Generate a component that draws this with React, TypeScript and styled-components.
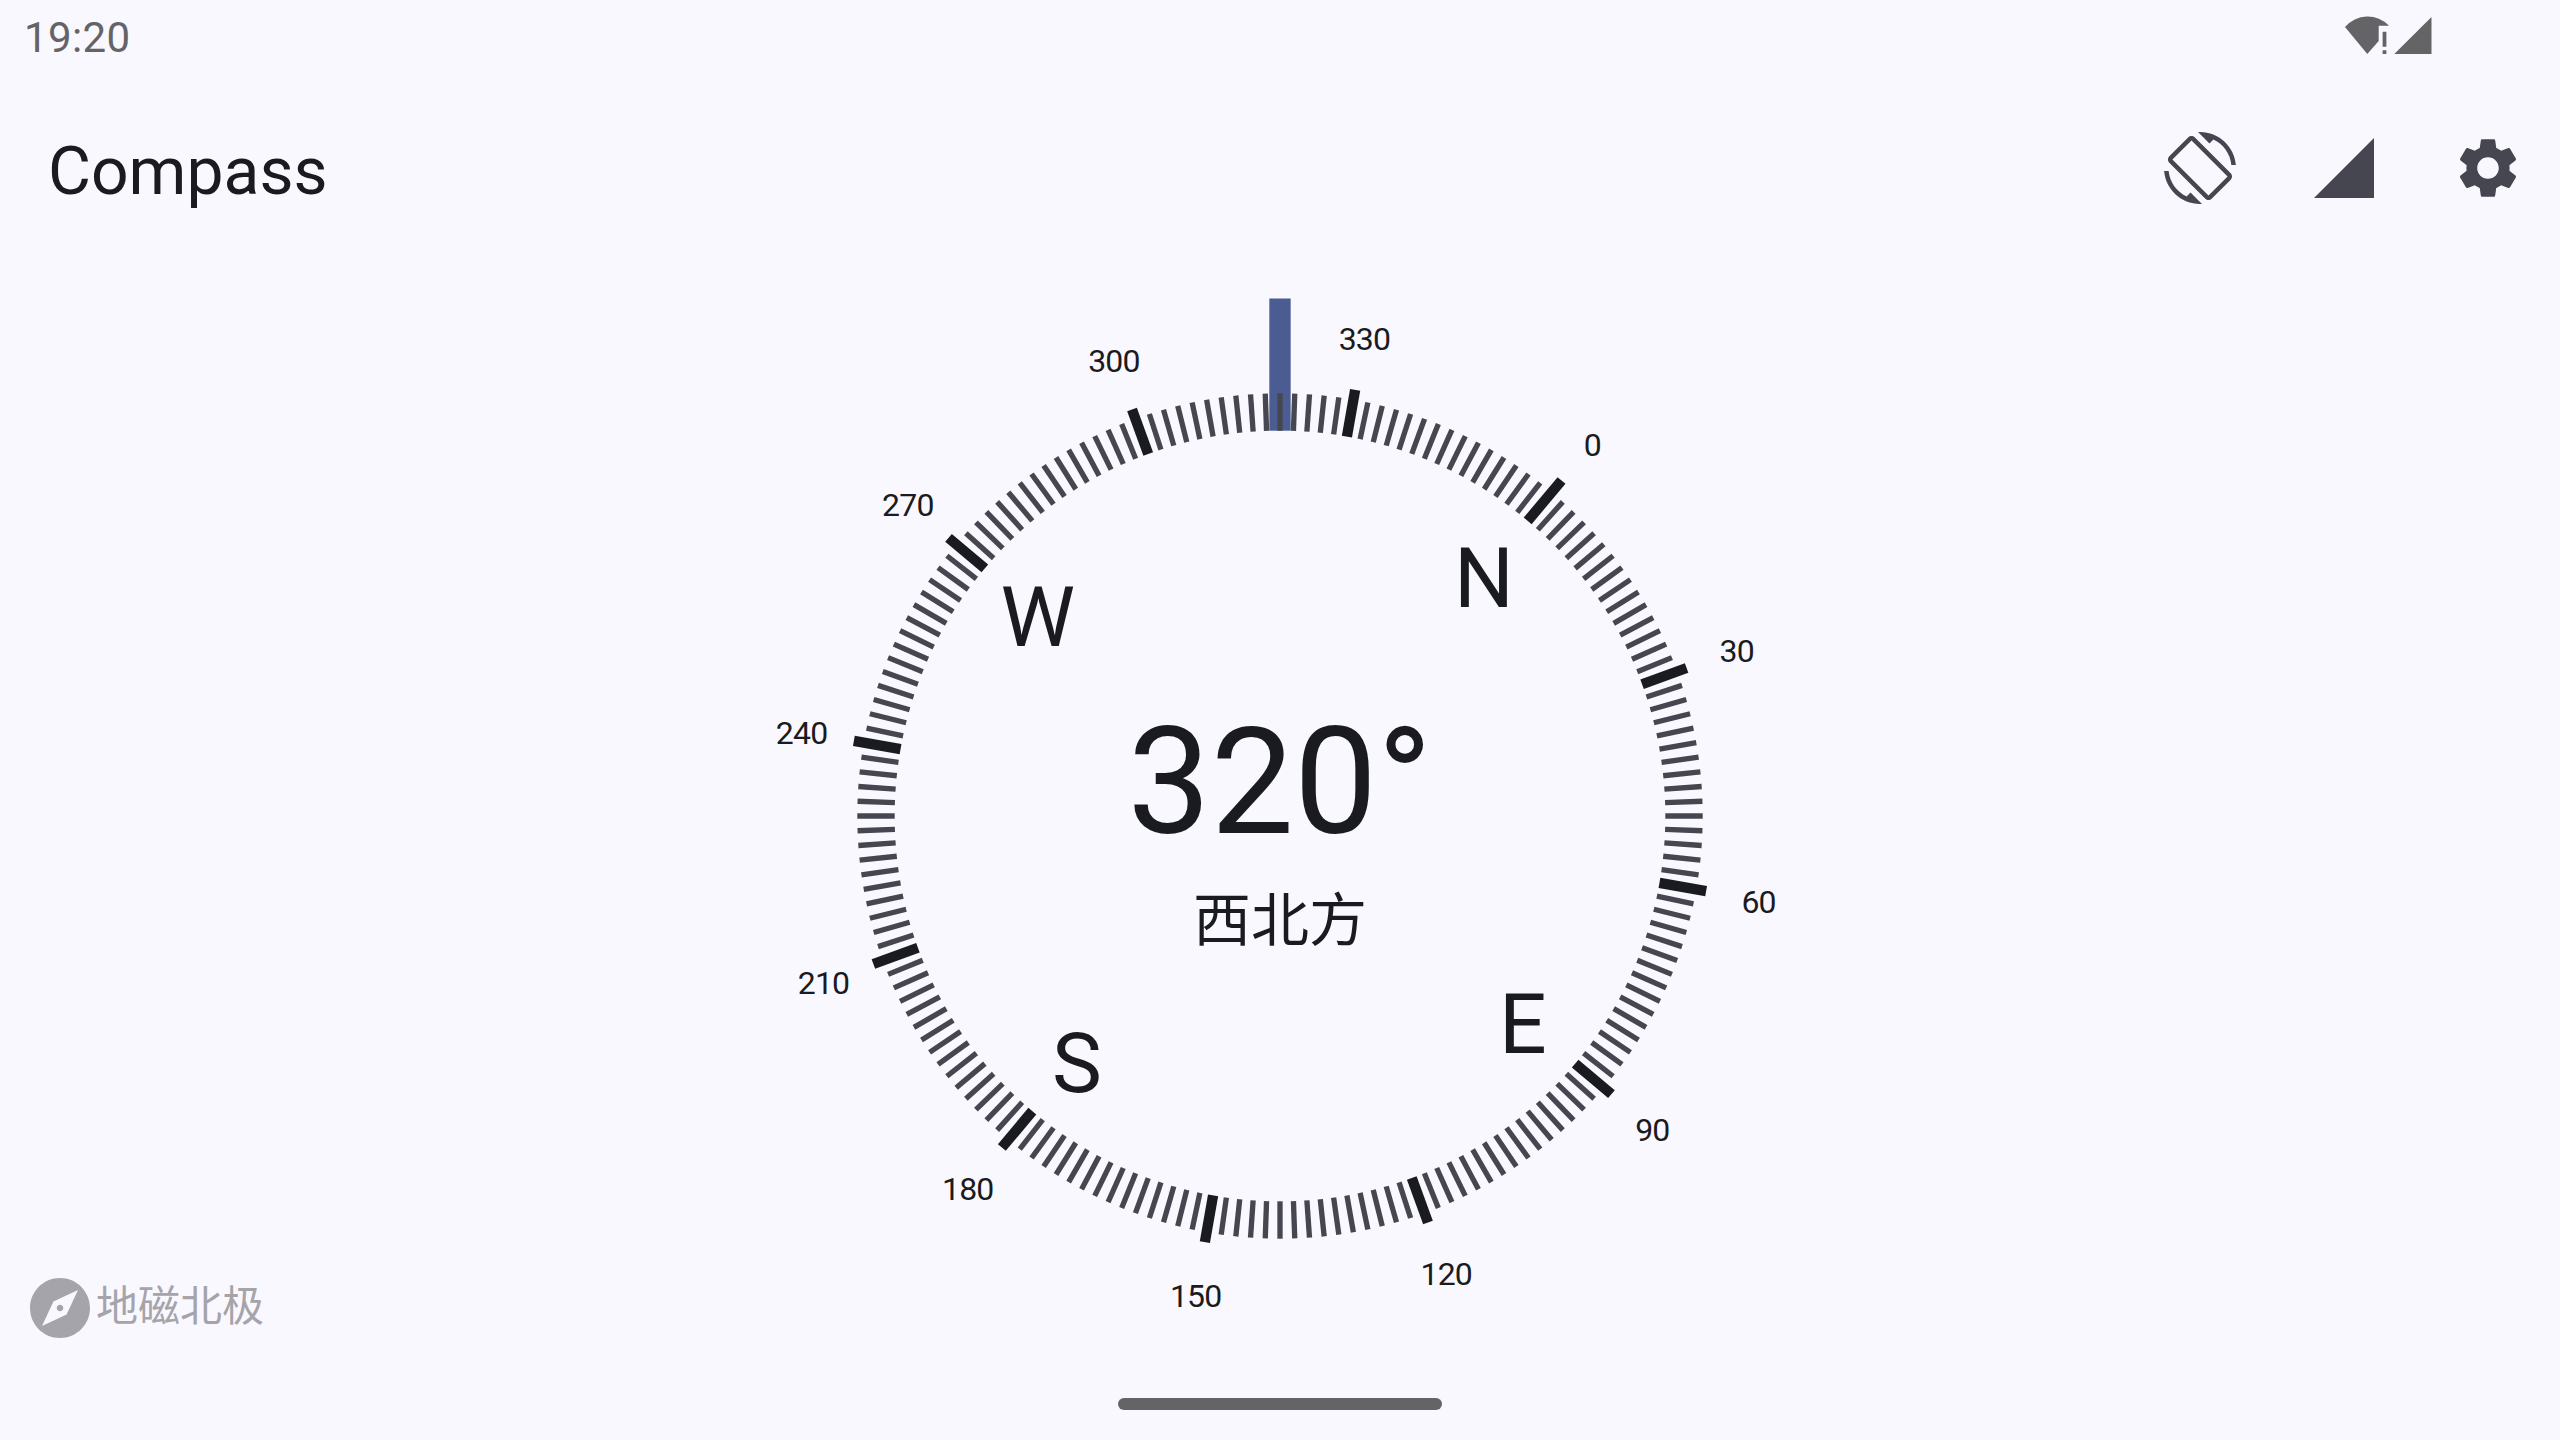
import React from "react";
import styled, { createGlobalStyle } from "styled-components";

const color = {
  surface: "#faf8ff",
  onSurface: "#1a1b20",
  variant: "#45464f",
  primary: "#4b5c92",
  system: "#646466",
  disabled: "#a5a4aa",
};

const GlobalStyle = createGlobalStyle`
  * { box-sizing: border-box; }
  body {
    margin: 0;
    background: ${color.surface};
    color: ${color.onSurface};
    font-family: Roboto, "Noto Sans CJK SC", sans-serif;
  }
`;

const Screen = styled.div`
  display: flex;
  flex-direction: column;
  width: 2560px;
  height: 1440px;
  overflow: hidden;
  background: ${color.surface};
`;

const StatusBar = styled.div`
  display: flex;
  justify-content: space-between;
  height: 72px;
  padding: 13px 127px 0 24px;
  color: ${color.system};
`;

const Clock = styled.span`
  font-size: 42px;
  line-height: 49px;
  letter-spacing: 0.35px;
`;

const StatusIcons = styled.svg`
  display: block;
  width: 90px;
  height: 48px;
  fill: currentColor;
`;

const AppBar = styled.header`
  display: flex;
  align-items: center;
  justify-content: space-between;
  height: 192px;
  padding: 0 36px 0 48px;
`;

const Title = styled.h1`
  margin: 8px 0 0;
  font-size: 66px;
  font-weight: 400;
  line-height: 84px;
`;

const Actions = styled.nav`
  display: flex;
  gap: 72px;
`;

const IconButton = styled.button`
  display: block;
  padding: 0;
  border: 0;
  background: none;
  color: ${color.variant};
`;

const Icon = styled.svg`
  display: block;
  width: 72px;
  height: 72px;
  flex: none;
  fill: currentColor;
`;

const Main = styled.main`
  display: grid;
  justify-items: center;
  height: 1104px;
`;

const Dial = styled.svg`
  grid-area: 1 / 1;
  width: 1104px;
  height: 1104px;
`;

const DialLabel = styled.text<{ $size: number; $spacing?: number }>`
  font-size: ${(p) => p.$size}px;
  letter-spacing: ${(p) => p.$spacing ?? 0}px;
  fill: ${color.onSurface};
  text-anchor: middle;
`;

const Reading = styled.div`
  grid-area: 1 / 1;
  display: flex;
  flex-direction: column;
  align-items: center;
  padding-top: 432px;
`;

const Degrees = styled.div`
  font-size: 148px;
  line-height: 174px;
`;

const Direction = styled.div`
  margin-top: 9px;
  font-size: 58px;
  line-height: 84px;
`;

const NorthMode = styled.div`
  grid-area: 1 / 1;
  justify-self: start;
  align-self: end;
  display: flex;
  align-items: center;
  padding: 0 0 24px 24px;
  color: ${color.disabled};
`;

const ModeText = styled.span`
  margin-bottom: 2px;
  font-size: 42px;
  line-height: 60px;
`;

const NavigationArea = styled.footer`
  display: flex;
  justify-content: center;
  height: 72px;
  padding-top: 30px;
`;

const Handle = styled.div`
  width: 324px;
  height: 12px;
  border-radius: 6px;
  background: ${color.system};
`;

const AZIMUTH = 320;
const CENTER = 552;

const point = (bearing: number, radius: number) => {
  const a = ((bearing - AZIMUTH) * Math.PI) / 180;
  return { x: CENTER + radius * Math.sin(a), y: CENTER - radius * Math.cos(a) };
};

const bearings = Array.from({ length: 180 }, (_, i) => i * 2);
const majors = bearings.filter((b) => b % 30 === 0);
const minors = bearings.filter((b) => b % 30 !== 0);
const cardinals = [
  { name: "N", bearing: 0 },
  { name: "E", bearing: 90 },
  { name: "S", bearing: 180 },
  { name: "W", bearing: 270 },
];

function Tick({ bearing, outer, width, stroke }: { bearing: number; outer: number; width: number; stroke: string }) {
  const a = point(bearing, 385.3);
  const b = point(bearing, outer);
  return <line x1={a.x} y1={a.y} x2={b.x} y2={b.y} stroke={stroke} strokeWidth={width} />;
}

function CompassDial() {
  return (
    <Dial viewBox="0 0 1104 1104">
      <rect x={541.33} y={34.5} width={21.33} height={132.2} fill={color.primary} />
      {minors.map((b) => (
        <Tick key={b} bearing={b} outer={422.7} width={5.33} stroke={color.variant} />
      ))}
      {majors.map((b) => (
        <Tick key={b} bearing={b} outer={b === 0 ? 438 : 432.7} width={10.3} stroke={color.onSurface} />
      ))}
      {majors.map((b) => {
        const p = point(b, 485.9);
        return (
          <DialLabel key={b} $size={32} $spacing={-0.8} x={p.x + 0.1} y={p.y + 12.2}>
            {b}
          </DialLabel>
        );
      })}
      {cardinals.map(({ name, bearing }) => {
        const p = point(bearing, 316.6);
        return (
          <DialLabel key={name} $size={84} x={p.x + 0.4} y={p.y + 33.3}>
            {name}
          </DialLabel>
        );
      })}
    </Dial>
  );
}

export default function App() {
  return (
    <Screen>
      <GlobalStyle />
      <StatusBar>
        <Clock>19:20</Clock>
        <StatusIcons viewBox="0 0 90 48">
          <path d="M2 14 A29.5 29.5 0 0 1 46 12.7 H35.7 V28 L24.3 41 Z" />
          <path d="M39.6 18.7h3.8v15h-3.8zM39.6 37.3h3.8v3.7h-3.8z" />
          <path d="M51.3 41 L88.5 4 V41 Z" />
        </StatusIcons>
      </StatusBar>
      <AppBar>
        <Title>Compass</Title>
        <Actions>
          <IconButton aria-label="Screen rotation">
            <Icon viewBox="0 0 24 24">
              <path d="M16.48 2.52c3.27 1.55 5.61 4.72 5.97 8.48h1.5C23.44 4.84 18.29 0 12 0l-.66.03 3.81 3.81 1.33-1.32zm-6.25-.77c-.59-.59-1.54-.59-2.12 0L1.75 8.11c-.59.59-.59 1.54 0 2.12l12.02 12.02c.59.59 1.54.59 2.12 0l6.36-6.36c.59-.59.59-1.54 0-2.12L10.23 1.75zm4.6 19.44L2.81 9.17l6.36-6.36 12.02 12.02-6.36 6.36zm-7.31.29C4.25 19.94 1.91 16.76 1.55 13H.05C.56 19.16 5.71 24 12 24l.66-.03-3.81-3.81-1.33 1.32z" />
            </Icon>
          </IconButton>
          <IconButton aria-label="Sensor status">
            <Icon viewBox="0 0 24 24">
              <path d="M2 22h20V2z" />
            </Icon>
          </IconButton>
          <IconButton aria-label="Settings">
            <Icon viewBox="0 0 24 24">
              <path d="M19.14 12.94c.04-.3.06-.61.06-.94 0-.32-.02-.64-.07-.94l2.03-1.58c.18-.14.23-.41.12-.61l-1.92-3.32c-.12-.22-.37-.29-.59-.22l-2.39.96c-.5-.38-1.03-.7-1.62-.94l-.36-2.54c-.04-.24-.24-.41-.48-.41h-3.84c-.24 0-.43.17-.47.41l-.36 2.54c-.59.24-1.13.57-1.62.94l-2.39-.96c-.22-.08-.47 0-.59.22L2.74 8.87c-.12.21-.08.47.12.61l2.03 1.58c-.05.3-.09.63-.09.94s.02.64.07.94l-2.03 1.58c-.18.14-.23.41-.12.61l1.92 3.32c.12.22.37.29.59.22l2.39-.96c.5.38 1.03.7 1.62.94l.36 2.54c.05.24.24.41.48.41h3.84c.24 0 .44-.17.47-.41l.36-2.54c.59-.24 1.13-.56 1.62-.94l2.39.96c.22.08.47 0 .59-.22l1.92-3.32c.12-.22.07-.47-.12-.61l-2.01-1.58zM12 15.6c-1.98 0-3.6-1.62-3.6-3.6s1.62-3.6 3.6-3.6 3.6 1.62 3.6 3.6-1.62 3.6-3.6 3.6z" />
            </Icon>
          </IconButton>
        </Actions>
      </AppBar>
      <Main>
        <CompassDial />
        <Reading>
          <Degrees>320°</Degrees>
          <Direction>西北方</Direction>
        </Reading>
        <NorthMode>
          <Icon viewBox="0 0 24 24">
            <path d="M12 10.9c-.61 0-1.1.49-1.1 1.1s.49 1.1 1.1 1.1c.61 0 1.1-.49 1.1-1.1s-.49-1.1-1.1-1.1zM12 2C6.48 2 2 6.48 2 12s4.48 10 10 10 10-4.48 10-10S17.52 2 12 2zm2.19 12.19L6 18l3.81-8.19L18 6l-3.81 8.19z" />
          </Icon>
          <ModeText>地磁北极</ModeText>
        </NorthMode>
      </Main>
      <NavigationArea>
        <Handle />
      </NavigationArea>
    </Screen>
  );
}
